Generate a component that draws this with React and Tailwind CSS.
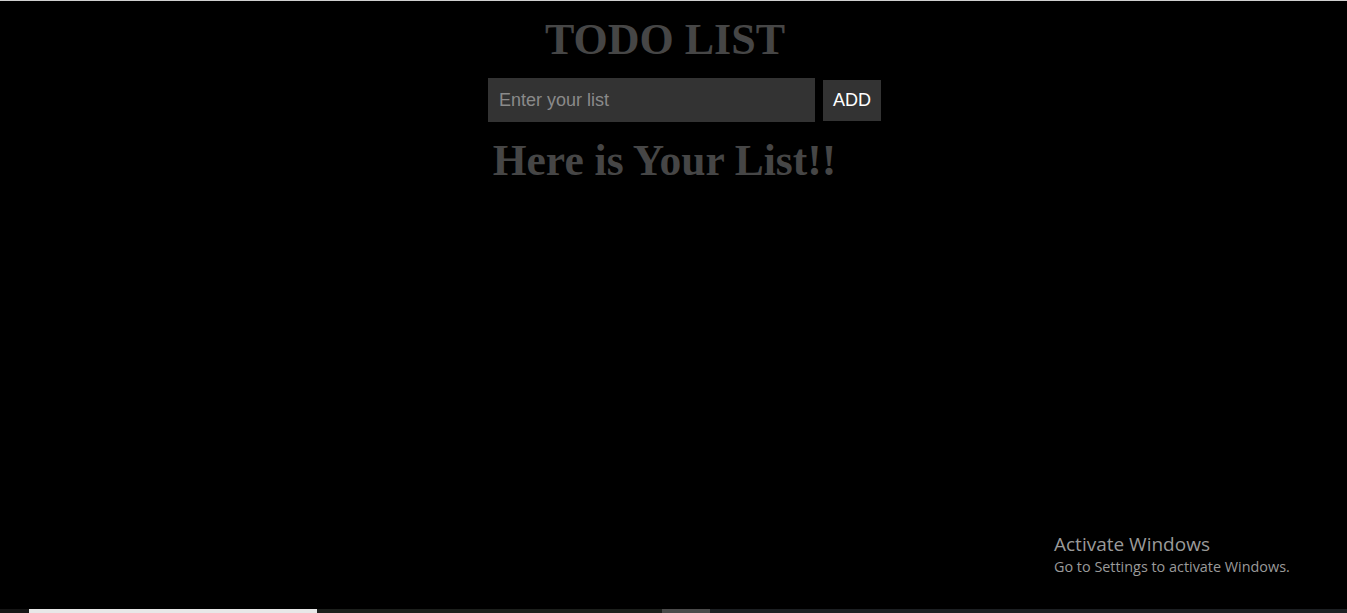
import React, { useState } from "react";

const App = () => {
  const [item, setItem] = useState("");
  const [items, setItems] = useState([]);

  const addItem = () => {
    if (!item.trim()) return;
    setItems([...items, item]);
    setItem("");
  };

  return (
    <div className="relative flex flex-col h-screen w-full overflow-hidden bg-black border-t border-[#cfcfcf]">
      {/* Main content */}
      <div className="flex flex-1 flex-col items-center pt-[17px]">
        <h1 className="-ml-[17px] text-[44px] leading-none font-bold text-[#464646] font-['Liberation_Serif',serif]">
          TODO LIST
        </h1>
        <div className="ml-[22px] mt-[16px] flex items-center gap-2">
          <input
            type="text"
            className="h-[44px] w-[327px] bg-[#333333] px-[11px] text-[18px] text-white placeholder-[#8a8a8a] outline-none font-['Liberation_Sans',sans-serif]"
            placeholder="Enter your list"
            value={item}
            onChange={(e) => setItem(e.target.value)}
          />
          <button
            onClick={addItem}
            className="h-[41px] w-[58px] bg-[#333333] text-[18px] text-white font-['Liberation_Sans',sans-serif]"
          >
            ADD
          </button>
        </div>
        <h1 className="-ml-[18px] mt-[17px] text-[43.5px] leading-none font-bold text-[#464646] font-['Liberation_Serif',serif]">
          Here is Your List!!
        </h1>
        <ul>
          {items.map((text, i) => (
            <li key={i} className="text-[#888] text-lg">{text}</li>
          ))}
        </ul>
      </div>

      {/* Windows watermark */}
      <div className="absolute left-[1054px] top-[531px] text-[#9a9a9a] font-['Open_Sans',sans-serif]">
        <p className="text-[19px] leading-[25px]">Activate Windows</p>
        <p className="text-[14.4px] leading-[20px]">Go to Settings to activate Windows.</p>
      </div>

      {/* Taskbar strip */}
      <div className="flex h-[4px] bg-[#151515]">
        <div className="w-[29px]" />
        <div className="w-[288px] bg-[#e8e8e8]" />
        <div className="w-[345px] bg-[#1c1f1c]" />
        <div className="w-[48px] bg-[#4a4a4a]" />
        <div className="flex-1 bg-[#1c1f22]" />
      </div>
    </div>
  );
};

export default App;
